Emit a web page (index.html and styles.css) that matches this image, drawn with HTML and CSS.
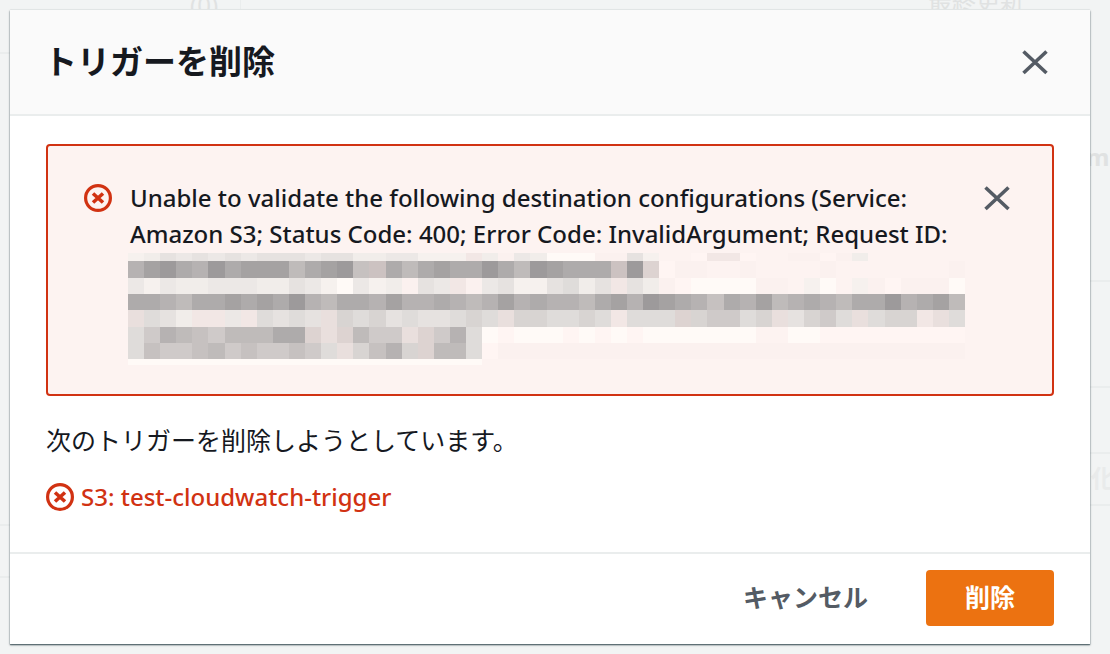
FILE: index.html
```html
<!DOCTYPE html>
<html lang="ja">
<head>
  <meta charset="UTF-8" />
  <meta name="viewport" content="width=device-width, initial-scale=1.0"/>
  <title>トリガーを削除</title>
  <link rel="stylesheet" href="styles.css">
</head>
<body>
  <!-- faded page behind the dialog -->
  <div class="backdrop" aria-hidden="true">
    <span class="ghost ghost-count">(0)</span>
    <span class="ghost ghost-updated">最終更新</span>
    <span class="ghost ghost-name">ml</span>
    <span class="ghost ghost-state">化</span>
    <i class="rule rule-col"></i>
    <i class="rule rule-left-1"></i>
    <i class="rule rule-left-2"></i>
    <i class="rule rule-left-3"></i>
    <i class="rule rule-right-1"></i>
    <i class="rule rule-right-2"></i>
    <i class="rule rule-right-3"></i>
    <i class="rule rule-right-4"></i>
  </div>

  <div class="modal" role="dialog" aria-labelledby="modalTitle">
    <header class="modal-header">
      <h1 id="modalTitle">トリガーを削除</h1>
      <button type="button" class="close-btn" aria-label="閉じる">
        <svg viewBox="0 0 28 28"><path d="M2.5 3.5L25.5 25M25.5 3.5L2.5 25"/></svg>
      </button>
    </header>

    <main class="modal-body">
      <div class="alert" role="alert">
        <svg class="error-icon" viewBox="0 0 28 28"><circle cx="14" cy="14" r="12.4"/><path d="M9 9.5L19 18.5M19 9.5L9 18.5"/></svg>
        <div class="alert-text">
          <p>Unable to validate the following destination configurations (Service:<br>Amazon S3; Status Code: 400; Error Code: InvalidArgument; Request ID:</p>
          <svg id="mosaic" class="mosaic" viewBox="0 0 832 112" preserveAspectRatio="none"></svg>
        </div>
        <button type="button" class="close-btn" aria-label="通知を閉じる">
          <svg viewBox="0 0 28 28"><path d="M2.5 3.5L25.5 25M25.5 3.5L2.5 25"/></svg>
        </button>
      </div>

      <p class="message">次のトリガーを削除しようとしています。</p>
      <p class="trigger">
        <svg class="error-icon" viewBox="0 0 28 28"><circle cx="14" cy="14" r="12.4"/><path d="M9 9.5L19 18.5M19 9.5L9 18.5"/></svg>
        <span>S3: test-cloudwatch-trigger</span>
      </p>
    </main>

    <footer class="modal-footer">
      <button type="button" class="btn btn-link">キャンセル</button>
      <button type="button" class="btn btn-primary">削除</button>
    </footer>
  </div>

  <script src="mosaic.js"></script>
</body>
</html>
```
FILE: styles.css
```css
* { box-sizing: border-box; }
body { margin: 0; padding: 10px 20px 10px 10px; min-height: 100vh; background-color: #f2f4f4; color: #16191f; font-family: "Noto Sans", "Noto Sans CJK JP", sans-serif; font-size: 24px; line-height: 36px; overflow: hidden; }
h1, p { margin: 0; }
button { font: inherit; border: none; background: none; padding: 0; cursor: pointer; }

.backdrop { position: absolute; inset: 0; overflow: hidden; }
.ghost { position: absolute; color: #e0e2e2; white-space: nowrap; }
.ghost-count { left: 190px; top: -13px; }
.ghost-updated { left: 928px; top: -17px; }
.ghost-name { left: 1086px; top: 139px; font-weight: bold; }
.ghost-state { left: 1091px; top: 460px; color: #e9ebeb; font-weight: bold; }
.rule { position: absolute; height: 2px; background-color: #eaeded; }
.rule-col { left: 240px; top: 0; width: 1px; height: 10px; }
.rule-left-1 { left: 0; top: 52px; width: 10px; }
.rule-left-2 { left: 0; top: 524px; width: 10px; }
.rule-left-3 { left: 0; top: 576px; width: 10px; }
.rule-right-1 { right: 0; top: 280px; width: 20px; }
.rule-right-2 { right: 0; top: 386px; width: 20px; }
.rule-right-3 { right: 0; top: 452px; width: 20px; }
.rule-right-4 { right: 0; top: 504px; width: 20px; }

.modal { position: relative; background-color: #fff; box-shadow: 0 1px 2px rgba(0, 28, 36, 0.5), 0 1px 1px rgba(0, 28, 36, 0.4), 0 -1px 0 #eaeded; }
.modal-header { display: flex; justify-content: space-between; align-items: center; height: 106px; padding: 0 41px 0 34px; background-color: #fafafa; border-bottom: 2px solid #eaeded; }
.modal-header h1 { font-size: 33px; line-height: 40px; font-weight: bold; }
.modal-body { padding: 28px 36px 36px; }

.close-btn { flex: none; width: 28px; height: 28px; }
.close-btn svg { display: block; width: 28px; height: 28px; fill: none; stroke: #545b64; stroke-width: 3.6; }

.alert { display: flex; align-items: flex-start; height: 252px; padding: 34px 41px 28px 36px; background-color: #fdf3f1; border: 2px solid #d13212; border-radius: 4px; font-weight: 500; }
.alert .error-icon { margin: 4px 18px 0 0; }
.alert .close-btn { margin-top: 4px; }
.alert-text { flex: 1; min-width: 0; white-space: nowrap; }
.error-icon { flex: none; width: 28px; height: 28px; fill: none; stroke: #d13212; stroke-width: 3.2; }
.error-icon path { stroke-width: 3.6; }
.mosaic { display: block; width: 837px; height: 112px; margin: 1px 0 0 -2px; }

.message { margin-top: 26px; font-size: 25px; }
.trigger { display: flex; align-items: center; gap: 7px; margin: 21px 0 1px; color: #d13212; font-weight: 500; }

.modal-footer { display: flex; justify-content: flex-end; align-items: center; gap: 16px; padding: 16px 36px 18px; border-top: 2px solid #eaeded; }
.btn { height: 56px; padding: 0 39px 2px; border-radius: 4px; font-size: 25px; font-weight: bold; }
.btn-link { padding: 0 42px 2px; color: #545b64; }
.btn-primary { background-color: #ec7211; color: #fff; }
```
FILE: mosaic.js
```js
// one letter per block, "." is empty
const shades = {
  0: '#9d9a9b', 1: '#a5a2a2', 2: '#aeabab', 3: '#b6b2b2', 4: '#bfbbba',
  5: '#c6c1c0', 6: '#cfcac9', 7: '#d8d4d2', 8: '#dfdcda', 9: '#e6e2e0',
  a: '#ece8e6', b: '#f1edea', c: '#f6f1ee', d: '#fbf1ef', e: '#fff5f3',
  f: '#fffaf7', p: '#ddd3d1', q: '#ccc2c1', r: '#e9dfdd', s: '#f2e7e5'
};

const rows = [
  [8, 'cb9a9a9a999a99bbaacccsbdabfffdd9c..esse..ddedb......'],
  [17, '310230211142105q24212202401222q0pedd..d....d.......d'],
  [16, 'acabbaaabb9acfacbd9asda9cc98b9s9bdeffffdd.cf.cdedddf'],
  [16, '2234221212034223133234313233421301235231432342203214'],
  [17, 'r89bssas8989r7879899878r778878s888p76687r9768r877sr8'],
  [16, '86345644422prp466rp638fefffefefefffffff..ffeeeeeeeee'],
  [16, '8566546566568r7537p448eddddddddddddddddddddddddddddd'],
  [6, 'ffffffffffffffffffffff']
];

const mosaic = document.getElementById('mosaic');
let html = '';
let y = 0;
rows.forEach(([height, cells]) => {
  [...cells].forEach((cell, i) => {
    if (cell === '.') return;
    html += `<rect x="${i * 16}" y="${y}" width="16" height="${height}" fill="${shades[cell]}" shape-rendering="crispEdges"/>`;
  });
  y += height;
});
mosaic.innerHTML = html;
```
